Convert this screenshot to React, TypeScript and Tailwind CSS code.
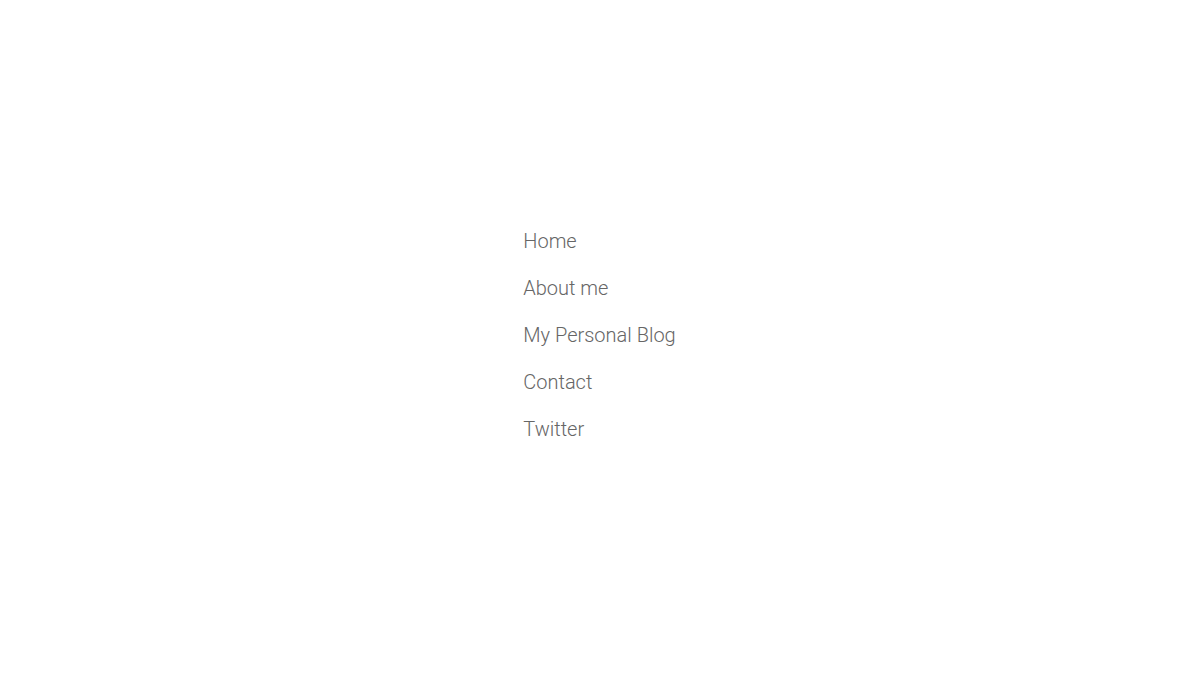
export default function App() {
  const items = ["Home", "About me", "My Personal Blog", "Contact", "Twitter"];
  return (
    <div className="flex h-[682px] w-full items-center justify-center bg-white pb-[12px] pr-[1px]" style={{ fontFamily: "Roboto, 'Liberation Sans', sans-serif" }}>
      <ul className="flex flex-col gap-[19px]">
        {items.map((t) => (
          <li key={t}>
            <a href="#" className="block text-[20px] font-light leading-[28px] text-[#666666]">{t}</a>
          </li>
        ))}
      </ul>
    </div>
  );
}
